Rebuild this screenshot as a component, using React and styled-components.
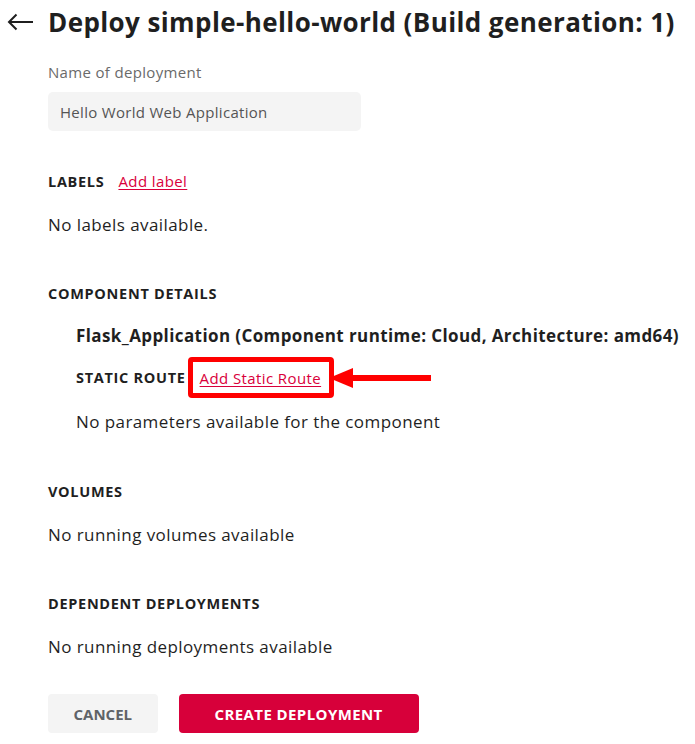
import React from 'react';
import styled, { createGlobalStyle } from 'styled-components';

const GlobalStyle = createGlobalStyle`
  html, body {
    margin: 0;
    padding: 0;
    background: #ffffff;
    font-family: "Open Sans", "Liberation Sans", sans-serif;
    color: #1f1f1f;
  }
`;

const Page = styled.main`
  width: 695px;
  padding: 6px 0 0 0;
  box-sizing: border-box;
`;

const Header = styled.header`
  display: flex;
  align-items: center;
  gap: 14px;
  padding-left: 7px;
  height: 32px;
`;

const BackButton = styled.button`
  display: flex;
  align-items: center;
  padding: 0;
  border: 0;
  background: none;
  color: #1f1f1f;
  cursor: pointer;
`;

const Title = styled.h1`
  margin: 0;
  font-size: 26px;
  font-weight: 700;
  letter-spacing: 0.4px;
  white-space: nowrap;
`;

const Body = styled.div`
  padding: 23px 0 0 48px;
`;

const FieldLabel = styled.label`
  display: block;
  font-size: 15px;
  letter-spacing: 0.33px;
  color: #6a6a6a;
  line-height: 22px;
`;

const TextInput = styled.input`
  display: block;
  box-sizing: border-box;
  width: 313px;
  height: 39px;
  margin-top: 9px;
  padding: 0 12px;
  border: 0;
  border-radius: 5px;
  background: #f4f4f4;
  font-family: inherit;
  font-size: 15px;
  letter-spacing: 0.3px;
  color: #555555;
  outline: none;
`;

const Section = styled.section`
  margin-top: ${(p) => p.$top ?? 40}px;
  padding-left: ${(p) => (p.$indent ? 28 : 0)}px;
`;

const SectionHead = styled.div`
  display: flex;
  align-items: center;
  gap: ${(p) => p.$gap ?? 14}px;
  min-height: 26px;
  margin-top: ${(p) => p.$top ?? 0}px;
`;

const Caps = styled.h3`
  margin: 0;
  font-size: 14.5px;
  font-weight: 700;
  text-transform: uppercase;
  color: #1f1f1f;
  letter-spacing: 0.7px;
`;

const Link = styled.a`
  font-size: 15px;
  letter-spacing: 0.4px;
  color: #d9003b;
  text-decoration: underline;
  text-underline-offset: 2px;
  cursor: pointer;
`;

const Note = styled.p`
  margin: ${(p) => p.$top ?? 18}px 0 0;
  font-size: 17px;
  letter-spacing: 0.42px;
  line-height: 26px;
  color: #1f1f1f;
`;

const ComponentName = styled.h4`
  margin: 17px 0 0;
  font-size: 17px;
  font-weight: 700;
  line-height: 26px;
  letter-spacing: 0.4px;
  white-space: nowrap;
`;

const Highlight = styled.span`
  position: relative;
  display: inline-flex;
  align-items: center;
  height: 41px;
  box-sizing: border-box;
  padding: 0 8px 0 7px;
  border: 5px solid #ff0000;
  border-radius: 4px;
`;

const Pointer = styled.svg`
  position: absolute;
  left: 100%;
  top: 50%;
  margin-top: -11px;
`;

const Actions = styled.div`
  display: flex;
  gap: 21px;
  margin-top: 34px;
`;

const Button = styled.button`
  height: 39px;
  padding: 0 ${(p) => (p.$primary ? 36 : 25.5)}px;
  border: 0;
  border-radius: 4px;
  background: ${(p) => (p.$primary ? '#d7003a' : '#f4f4f4')};
  color: ${(p) => (p.$primary ? '#ffffff' : '#5f6368')};
  font-family: inherit;
  font-size: 15px;
  font-weight: 700;
  letter-spacing: ${(p) => (p.$primary ? 0.4 : 0)}px;
  text-transform: uppercase;
  cursor: pointer;
`;

function BackArrow() {
  return (
    <svg width='27' height='18' viewBox='0 0 27 18' fill='none'>
      <path d='M26 9H2M9.5 1.5 2 9l7.5 7.5' stroke='#1f1f1f' strokeWidth='2' />
    </svg>
  );
}

export default function App() {
  return (
    <Page>
      <GlobalStyle />
      <Header>
        <BackButton aria-label='Back'>
          <BackArrow />
        </BackButton>
        <Title>Deploy simple-hello-world (Build generation: 1)</Title>
      </Header>
      <Body>
        <FieldLabel>Name of deployment</FieldLabel>
        <TextInput defaultValue='Hello World Web Application' />

        <Section $top={37}>
          <SectionHead>
            <Caps>Labels</Caps>
            <Link>Add label</Link>
          </SectionHead>
          <Note>No labels available.</Note>
        </Section>

        <Section $top={42}>
          <SectionHead>
            <Caps>Component details</Caps>
          </SectionHead>
          <Section $indent $top={0}>
            <ComponentName>
              Flask_Application (Component runtime: Cloud, Architecture: amd64)
            </ComponentName>
            <SectionHead $gap={2} $top={8}>
              <Caps>Static route</Caps>
              <Highlight>
                <Link>Add Static Route</Link>
                <Pointer width='104' height='22' viewBox='0 0 104 22'>
                  <path d='M0 11 24 1v20z' fill='#ff0000' />
                  <rect x='22' y='8' width='80' height='6' fill='#ff0000' />
                </Pointer>
              </Highlight>
            </SectionHead>
            <Note $top={11}>No parameters available for the component</Note>
          </Section>
        </Section>

        <Section $top={43}>
          <SectionHead>
            <Caps>Volumes</Caps>
          </SectionHead>
          <Note>No running volumes available</Note>
        </Section>

        <Section $top={42}>
          <SectionHead>
            <Caps>Dependent deployments</Caps>
          </SectionHead>
          <Note>No running deployments available</Note>
        </Section>

        <Actions>
          <Button>Cancel</Button>
          <Button $primary>Create deployment</Button>
        </Actions>
      </Body>
    </Page>
  );
}
